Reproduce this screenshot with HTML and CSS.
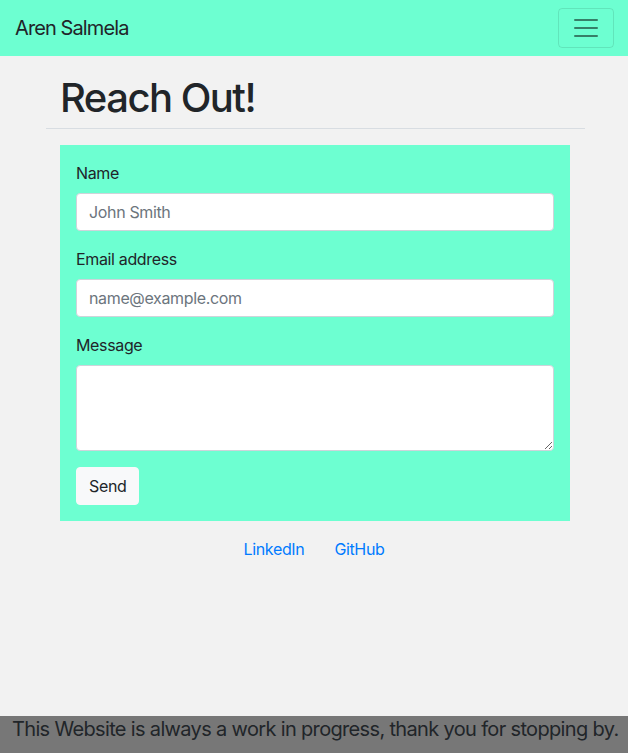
FILE: index.html
```html
<!DOCTYPE html>
<html lang="en">
<head>
<meta charset="utf-8">
<title>Aren Salmela - Contact</title>
<link rel="stylesheet" href="styles.css">
</head>
<body>
<nav class="navbar">
  <a class="brand" href="#">Aren Salmela</a>
  <button class="toggler" type="button" aria-label="Toggle navigation">
    <svg width="30" height="30" viewBox="0 0 30 30"><path d="M4 7h22M4 15h22M4 23h22" stroke="rgba(0,0,0,0.5)" stroke-width="2" stroke-linecap="round" fill="none"/></svg>
  </button>
</nav>
<main class="container">
  <h1 class="title">Reach Out!</h1>
  <hr class="rule">
  <form class="contact">
    <div class="group">
      <label class="label" for="name">Name</label>
      <input class="control" id="name" type="text" placeholder="John Smith">
    </div>
    <div class="group">
      <label class="label" for="email">Email address</label>
      <input class="control" id="email" type="email" placeholder="name@example.com">
    </div>
    <div class="group">
      <label class="label" for="msg">Message</label>
      <textarea class="control area" id="msg"></textarea>
    </div>
    <button class="send" type="button">Send</button>
  </form>
  <div class="links">
    <a href="#">LinkedIn</a>
    <a href="#">GitHub</a>
  </div>
</main>
<footer class="footer">This Website is always a work in progress, thank you for stopping by.</footer>
</body>
</html>
```
FILE: styles.css
```css
* { box-sizing: border-box; }
html, body { margin: 0; padding: 0; }
body {
  background: #f2f2f2;
  color: #212529;
  font-family: Inter, "Noto Sans", sans-serif;
  font-size: 16px;
  line-height: 1.5;
  letter-spacing: -0.022em;
  min-height: 753px;
}
.navbar {
  height: 56px;
  background: #6dffd1;
  display: flex;
  align-items: center;
  justify-content: space-between;
  padding: 0 14px 0 15px;
}
.brand {
  font-size: 20px;
  color: #212529;
  text-decoration: none;
  line-height: 30px;
  letter-spacing: -0.045em;
}
.toggler {
  width: 56px;
  height: 40px;
  background: transparent;
  border: 1px solid rgba(0,0,0,0.1);
  border-radius: 4px;
  padding: 4px 12px;
  display: flex;
  align-items: center;
  justify-content: center;
}
.toggler svg { display: block; }
.container {
  width: 540px;
  margin: 0 auto;
  padding: 0 15px;
}
.title {
  font-size: 40px;
  font-weight: 500;
  line-height: 1.2;
  margin: 18px 0 0 1px;
  letter-spacing: -0.038em;
}
.rule {
  margin: 6px -16px 16px -13px;
  border: 0;
  border-top: 1px solid #d8dde2;
}
.contact {
  background: #6dffd1;
  margin: 0 -1px 0 1px;
  padding: 16px;
}
.group { margin-bottom: 16px; }
.label {
  display: block;
  margin-bottom: 8px;
  line-height: 24px;
}
.control {
  display: block;
  width: 100%;
  height: 38px;
  padding: 6px 12px;
  font-family: inherit;
  font-size: 16px;
  letter-spacing: -0.022em;
  line-height: 24px;
  color: #495057;
  background: #fff;
  border: 1px solid #ced4da;
  border-radius: 4px;
}
.control::placeholder { color: #6c757d; }
.area { height: 86px; resize: vertical; }
.send {
  font-family: inherit;
  font-size: 16px;
  letter-spacing: -0.022em;
  line-height: 24px;
  padding: 6px 12px;
  height: 38px;
  background: #f8f9fa;
  color: #212529;
  border: 1px solid #f8f9fa;
  border-radius: 4px;
}
.links {
  display: flex;
  justify-content: center;
  gap: 30px;
  margin-top: 16px;
  line-height: 24px;
}
.links a { color: #007bff; text-decoration: none; }
.footer {
  position: fixed;
  left: 0;
  right: 0;
  bottom: 0;
  height: 37px;
  background: #777777;
  color: #212529;
  font-size: 20px;
  letter-spacing: -0.033em;
  line-height: 24px;
  padding: 1px 0 0 12px;
  white-space: nowrap;
}
```
